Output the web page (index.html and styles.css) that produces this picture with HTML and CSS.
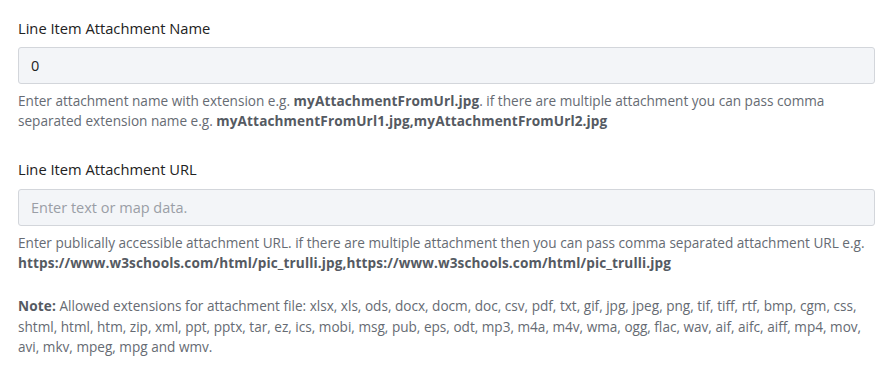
FILE: index.html
```html
<!DOCTYPE html>
<html>
<head>
<meta charset="utf-8">
<link rel="stylesheet" href="styles.css">
</head>
<body>
<div class="form">
  <div class="field">
    <label class="label">Line Item Attachment Name</label>
    <div class="input">0</div>
    <p class="help">Enter attachment name with extension e.g. <b>myAttachmentFromUrl.jpg</b>. if there are multiple attachment you can pass comma separated extension name e.g. <b>myAttachmentFromUrl1.jpg,myAttachmentFromUrl2.jpg</b></p>
  </div>
  <div class="field">
    <label class="label">Line Item Attachment URL</label>
    <div class="input placeholder">Enter text or map data.</div>
    <p class="help">Enter publically accessible attachment URL. if there are multiple attachment then you can pass comma separated attachment URL e.g. <b>https://www.w3schools.com/html/pic_trulli.jpg,https://www.w3schools.com/html/pic_trulli.jpg</b></p>
  </div>
  <p class="help note"><b>Note:</b> Allowed extensions for attachment file: xlsx, xls, ods, docx, docm, doc, csv, pdf, txt, gif, jpg, jpeg, png, tif, tiff, rtf, bmp, cgm, css, shtml, html, htm, zip, xml, ppt, pptx, tar, ez, ics, mobi, msg, pub, eps, odt, mp3, m4a, m4v, wma, ogg, flac, wav, aif, aifc, aiff, mp4, mov, avi, mkv, mpeg, mpg and wmv.</p>
</div>
</body>
</html>
```
FILE: styles.css
```css
html, body {
  margin: 0;
  padding: 0;
  background: #fff;
}
body {
  font-family: "Open Sans", sans-serif;
  color: #222;
}
.form {
  padding: 18px 9px 0 18px;
  display: flex;
  flex-direction: column;
}
.field {
  display: flex;
  flex-direction: column;
  margin-bottom: 22px;
}
.field + .field {
  margin-top: 6px;
}
.label {
  font-size: 14.7px;
  line-height: 20px;
  color: #222;
  margin-bottom: 9px;
}
.field + .field .label {
  margin-bottom: 10px;
}
.input {
  box-sizing: border-box;
  height: 37px;
  border: 1px solid #d3d6db;
  border-radius: 3px;
  background: #f3f5f8;
  padding: 0 16px 0 12px;
  font-size: 14.5px;
  line-height: 35px;
  color: #222;
}
.input.placeholder {
  color: #9a9ea6;
}
.help {
  margin: 7px 0 0;
  font-size: 13.6px;
  line-height: 20px;
  color: #666b73;
}
.help b {
  font-weight: 700;
  color: #555a62;
  letter-spacing: 0.12px;
}
.note {
  margin: 1px 0 0;
  line-height: 20.5px;
}
```
